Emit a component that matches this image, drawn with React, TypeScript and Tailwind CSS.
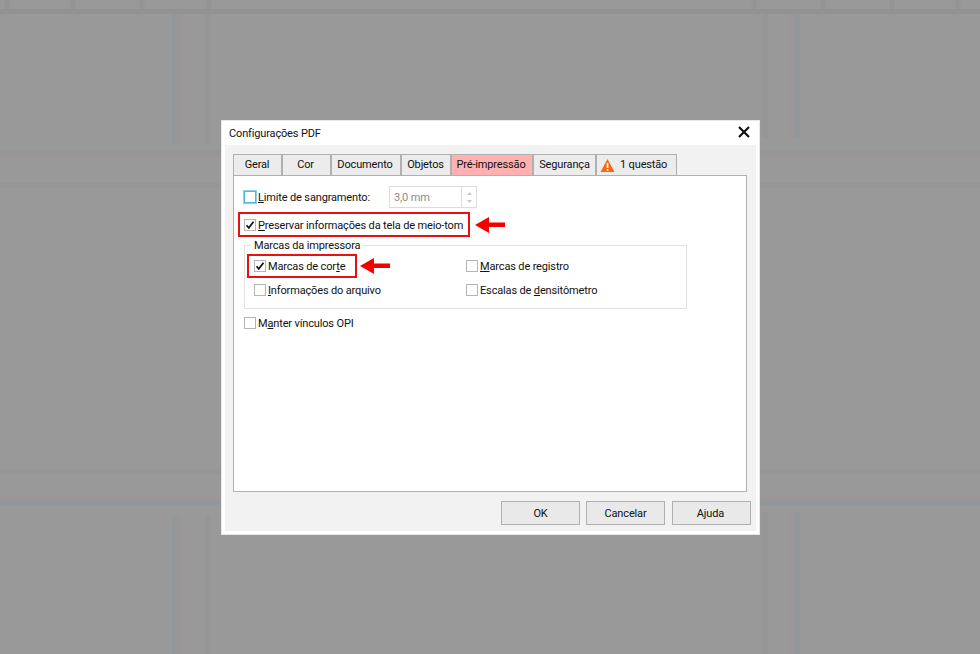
import React from "react";

function Check({ checked, focus }: { checked?: boolean; focus?: boolean }) {
  return (
    <span className={`flex h-[12px] w-[12px] shrink-0 items-center justify-center border bg-white ${focus ? "border-[#4db4ea] ring-1 ring-[#8fd0f2]" : "border-[#b4b4b4]"}`}>
      {checked && (
        <svg width="10" height="10" viewBox="0 0 10 10">
          <path d="M1.5 5.2 L3.8 7.8 L8.5 1.8" fill="none" stroke="#111" strokeWidth="1.7" />
        </svg>
      )}
    </span>
  );
}

function Opt({ checked, focus, children }: { checked?: boolean; focus?: boolean; children: React.ReactNode }) {
  return (
    <div className="flex items-center gap-[2px]">
      <Check checked={checked} focus={focus} />
      <span className="translate-y-[1px] whitespace-nowrap">{children}</span>
    </div>
  );
}

function Arrow() {
  return (
    <svg width="30" height="18" viewBox="0 0 30 18" className="shrink-0">
      <path d="M0 9 L14 1 L14 6.5 L30 6.5 L30 11 L14 11 L14 17 Z" fill="#f40000" />
    </svg>
  );
}

const tabs: [string, string, string?][] = [
  ["Geral", "w-[49px] pr-[1px]"],
  ["Cor", "w-[49px] pr-[2px]"],
  ["Documento", "w-[70px] pr-[2px]"],
  ["Objetos", "w-[50px] pr-[1px]"],
  ["Pré-impressão", "w-[82px] pr-[2px]", "bg-[#ffb0b0]"],
  ["Segurança", "w-[63px]"],
];

function Background() {
  const bumps = [7, 73, 142, 209, 754, 823, 892, 958];
  return (
    <svg width="980" height="654" viewBox="0 0 980 654" className="absolute left-0 top-0 blur-[0.7px]">
      <rect x="-5" y="9" width="990" height="5" fill="#929292" />
      {bumps.map((x) => (
        <rect key={x} x={x - 2.5} y="-5" width="5" height="14" rx="2" fill="#949494" />
      ))}
      <rect x="172" y="14" width="5" height="130" fill="#949799" />
      <rect x="177" y="14" width="5" height="130" fill="#9c9696" />
      <rect x="205" y="14" width="5" height="130" fill="#949795" />
      <rect x="763" y="14" width="5" height="124" fill="#949795" />
      <rect x="789" y="14" width="5" height="124" fill="#9c9696" />
      <rect x="794" y="14" width="6" height="124" fill="#949799" />
      <rect x="-5" y="150" width="990" height="4" fill="#949799" />
      <rect x="-5" y="154" width="990" height="4" fill="#9c9696" />
      <rect x="-5" y="183" width="990" height="5" fill="#949795" />
      <rect x="-5" y="469" width="990" height="5" fill="#949795" />
      <rect x="-5" y="496" width="990" height="4" fill="#9c9696" />
      <rect x="-5" y="500" width="990" height="5" fill="#949799" />
      <rect x="172" y="515" width="5" height="145" fill="#949799" />
      <rect x="177" y="515" width="5" height="145" fill="#9c9696" />
      <rect x="205" y="515" width="5" height="145" fill="#949795" />
      <rect x="763" y="512" width="5" height="148" fill="#949795" />
      <rect x="789" y="512" width="5" height="148" fill="#9c9696" />
      <rect x="794" y="512" width="6" height="148" fill="#949799" />
    </svg>
  );
}

export default function App() {
  return (
    <div className="relative h-[654px] w-[980px] overflow-hidden bg-[#999999] text-[11px] leading-[16px] tracking-[-0.15px] text-[#111111]" style={{ fontFamily: 'Roboto, sans-serif' }}>
      <Background />
      <div className="relative pl-[221px] pt-[120px]">
        <div className="flex h-[415px] w-[539px] flex-col border border-[#e8e8e8] bg-white">
          <div className="flex h-[24px] items-center justify-between pl-[7px] pr-[8px]">
            <span className="translate-y-[1px]">Configurações PDF</span>
            <svg width="14" height="14" viewBox="0 0 14 14" className="-translate-y-[1px]">
              <path d="M2 2 L12 12 M12 2 L2 12" stroke="#111" strokeWidth="2.2" />
            </svg>
          </div>
          <div className="mx-[3px] mb-[3px] flex flex-1 flex-col bg-[#f2f2f2] px-[8px] pt-[9px]">
            <div className="flex h-[21px]">
              {tabs.map(([t, w, bg]) => (
                <div key={t} className={`flex h-[21px] items-center justify-center border-x border-t border-[#b0b0b0] ${w} ${bg ?? "bg-[#ececec]"}`}>
                  {t}
                </div>
              ))}
              <div className="flex h-[21px] w-[81px] items-center gap-[5px] border-x border-t border-[#b0b0b0] bg-[#ececec] pl-[3px]">
                <svg width="15" height="15" viewBox="0 0 15 15">
                  <path d="M7.5 1 L14.5 14 L0.5 14 Z" fill="#f26a0f" />
                  <rect x="6.7" y="5" width="1.7" height="5" fill="#fff" />
                  <rect x="6.7" y="11" width="1.7" height="1.7" fill="#fff" />
                </svg>
                <span>1 questão</span>
              </div>
            </div>
            <div className="flex h-[317px] w-[514px] flex-col border border-[#b0b0b0] bg-white pl-[10px] pt-[10px]">
              <div className="flex h-[22px] items-center">
                <div className="w-[145px]">
                  <Opt focus><><u>L</u>imite de sangramento:</></Opt>
                </div>
                <div className="flex h-[22px] w-[88px] border border-[#dcdcdc] text-[#8a8a8a]">
                  <span className="flex-1 translate-y-[1px] pl-[4px] leading-[20px]">3,0 mm</span>
                  <div className="flex w-[15px] flex-col items-center justify-center gap-[5px] border-l border-[#dcdcdc]">
                    <svg width="5" height="3" viewBox="0 0 5 3"><path d="M0 3 L2.5 0 L5 3 Z" fill="#c8c8c8" /></svg>
                    <svg width="5" height="3" viewBox="0 0 5 3"><path d="M0 0 L2.5 3 L5 0 Z" fill="#c8c8c8" /></svg>
                  </div>
                </div>
              </div>
              <div className="ml-[-6px] mt-[4px] flex items-center gap-[5px]">
                <div className="flex h-[25px] w-[232px] items-center border-2 border-[#e81010] pl-[4px]">
                  <Opt checked><><u>P</u>reservar informações da tela de meio-tom</></Opt>
                </div>
                <Arrow />
              </div>
              <div className="relative mt-[8px] grid h-[64px] w-[443px] grid-cols-[219px_1fr] grid-rows-[24px_24px] border border-[#e2e2e2] pl-[2px] pt-[8px]">
                <span className="absolute left-[6px] top-[-8px] bg-white px-[3px]">Marcas da impressora</span>
                <div className="flex items-center gap-[3px] self-center">
                  <div className="flex h-[24px] w-[110px] shrink-0 items-center border-2 border-[#e81010] pl-[5px]">
                    <Opt checked><>Marcas de cor<u>t</u>e</></Opt>
                  </div>
                  <Arrow />
                </div>
                <div className="flex items-center"><Opt><><u>M</u>arcas de registro</></Opt></div>
                <div className="flex items-center pl-[7px]"><Opt><><u>I</u>nformações do arquivo</></Opt></div>
                <div className="flex items-center"><Opt>Escalas de <u>d</u>ensitômetro</Opt></div>
              </div>
              <div className="mt-[6px]">
                <Opt>M<u>a</u>nter vínculos OPI</Opt>
              </div>
            </div>
            <div className="ml-[268px] mt-[9px] flex">
              <div className="flex h-[24px] w-[79px] shrink-0 items-center justify-center border border-[#b0b0b0] bg-[#e9e9e9] pt-[2px]">OK</div>
              <div className="ml-[6px] flex h-[24px] w-[79px] shrink-0 items-center justify-center border border-[#b0b0b0] bg-[#e9e9e9] pt-[2px]">Cancelar</div>
              <div className="ml-[7px] flex h-[24px] w-[79px] shrink-0 items-center justify-center border border-[#b0b0b0] bg-[#e9e9e9] pr-[2px] pt-[2px]">Ajuda</div>
            </div>
          </div>
        </div>
      </div>
    </div>
  );
}
